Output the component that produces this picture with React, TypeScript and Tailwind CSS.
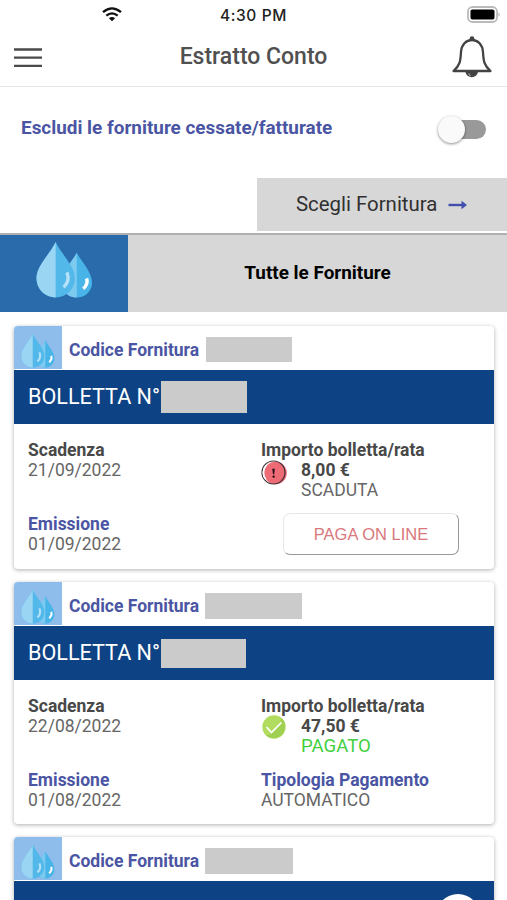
import type { ReactNode } from 'react';

interface BillDetails {
  numberClass: string;
  heightClass: string;
  dueDate: string;
  issueDate: string;
  amount: string;
  paid: boolean;
}

interface Bill {
  id: number;
  codeClass: string;
  details?: BillDetails;
}

const bills: Bill[] = [
  {
    id: 1,
    codeClass: 'ml-[7px] w-[86px] h-[25px]',
    details: {
      numberClass: 'w-[86px] h-[32px]',
      heightClass: 'h-[243px]',
      dueDate: '21/09/2022',
      issueDate: '01/09/2022',
      amount: '8,00 €',
      paid: false,
    },
  },
  {
    id: 2,
    codeClass: 'ml-[6px] w-[97px] h-[26px]',
    details: {
      numberClass: 'w-[85px] h-[29px]',
      heightClass: 'h-[242px]',
      dueDate: '22/08/2022',
      issueDate: '01/08/2022',
      amount: '47,50 €',
      paid: true,
    },
  },
  { id: 3, codeClass: 'ml-[6px] w-[88px] h-[26px]' },
];

function Drops({ className }: { className: string }) {
  return (
    <svg viewBox="0 0 58 58" className={className} preserveAspectRatio="none">
      <path d="M41.5 12C46 21 57 31 57 42.5A15.5 15 0 0 1 26 42.5C26 31 37 21 41.5 12Z" fill="#48b4e8" />
      <path d="M41.5 12C37 21 26 31 26 42.5A15.5 15 0 0 0 41.5 57.5Z" fill="#7dcaf1" />
      <path d="M20 1C26 14 39.5 25 39.5 38A19.5 19.5 0 0 1 .5 38C.5 25 14 14 20 1Z" fill="#52b8e9" />
      <path d="M20 1C14 14 .5 25 .5 38A19.5 19.5 0 0 0 20 57.5Z" fill="#9ad5f3" />
      <path d="M31.5 32Q35 41 28 47" fill="none" stroke="#b5e1f8" strokeWidth="3.5" />
      <path d="M51.5 38Q53.5 44 48 48.5" fill="none" stroke="#fff" strokeWidth="3.5" />
    </svg>
  );
}

function StatusBar() {
  return (
    <div className="grid h-[30px] shrink-0 grid-cols-3 items-center">
      <svg viewBox="0 0 20 15" className="ml-[102px] mt-[-2px] h-[15px] w-5">
        <path d="M1 5.2Q10-2.5 19 5.2M4.3 8.7Q10 4 15.7 8.7" fill="none" stroke="#111" strokeWidth="2.3" />
        <path d="M6.9 11.2Q10 8.7 13.1 11.2L10 14.3Z" fill="#111" />
      </svg>
      <span className="pt-px text-center font-['Inter'] text-[15.5px] font-medium tracking-[0.6px] text-[#222]">
        4:30 PM
      </span>
      <svg viewBox="0 0 34 18" className="mr-[6px] mt-[-1px] h-[18px] w-[34px] justify-self-end">
        <rect x="1" y="1" width="29" height="15" rx="4.5" fill="#fff" stroke="#bbb" strokeWidth="1.8" />
        <rect x="3.5" y="3.5" width="24" height="10" rx="1.8" fill="#000" />
        <path d="M31.5 6.5Q34 8.5 31.5 10.5Z" fill="#aaa" />
      </svg>
    </div>
  );
}

function Header() {
  return (
    <header className="flex h-[57px] shrink-0 items-center justify-between border-b border-[#e6e6e6] pl-[14px] pr-[14px]">
      <svg viewBox="0 0 42 22" className="h-[22px] w-[42px]">
        <path d="M0 2.5H28M0 10.7H28M0 18.9H28" stroke="#4a4a4a" strokeWidth="2.3" />
      </svg>
      <h1 className="pb-px text-[23px] font-medium text-[#505050]">Estratto Conto</h1>
      <svg viewBox="0 0 42 44" className="-mt-[2px] h-11 w-[42px]">
        <circle cx="21" cy="3.5" r="2.3" fill="#424242" />
        <path d="M14.5 37A6.3 6 0 0 0 27 37Z" fill="#424242" />
        <path d="M17.5 38.5L19.5 41" stroke="#aaa" strokeWidth="1.2" />
        <path
          d="M2.5 36C9.5 30 9.5 25 10 17C10.5 9.5 15 5 21 5S31.5 9.5 32 17C32.5 25 32.5 30 39.5 36Z"
          fill="#fff"
          stroke="#424242"
          strokeWidth="2.3"
          strokeLinejoin="round"
        />
      </svg>
    </header>
  );
}

function Field({ label, blue, children }: { label: string; blue?: boolean; children: ReactNode }) {
  return (
    <div>
      <p className={blue ? 'font-bold text-[#4a55a3]' : 'font-bold text-[#484848]'}>{label}</p>
      {children}
    </div>
  );
}

function AlertIcon() {
  return (
    <svg viewBox="0 0 26 26" className="h-[26px] w-[26px] shrink-0">
      <circle cx="14.5" cy="13" r="11.3" fill="#ee6b75" />
      <circle cx="12.5" cy="12.5" r="11.5" fill="none" stroke="#3c3035" strokeWidth="1.2" />
      <path d="M5 5.5A10.5 10.5 0 0 0 5 19.5" fill="none" stroke="#fff" strokeWidth="1.6" />
      <path d="M11.3 8.8H13.8L13.2 14.3H12Z" fill="#251014" />
      <circle cx="12.6" cy="16.6" r="1.2" fill="#251014" />
    </svg>
  );
}

function CheckIcon() {
  return (
    <svg viewBox="0 0 26 26" className="-mt-[2px] h-[26px] w-[26px] shrink-0">
      <circle cx="13" cy="13" r="11.7" fill="#b1dc5f" />
      <path d="M20.5 4A11.7 11.7 0 0 1 5 21.5Q17 19 20.5 4Z" fill="#9fd052" />
      <path d="M5.5 13L10.5 18.5L20.5 8.5" fill="none" stroke="#fff" strokeWidth="1.7" />
    </svg>
  );
}

function BillBody({ details }: { details: BillDetails }) {
  return (
    <div className="grid grid-cols-[233px_1fr] pl-[14px] pt-4 text-[17.5px] leading-5 text-[#666]">
      <div className="flex flex-col gap-[34px]">
        <Field label="Scadenza">
          <p>{details.dueDate}</p>
        </Field>
        <Field label="Emissione" blue>
          <p>{details.issueDate}</p>
        </Field>
      </div>
      <div>
        <Field label="Importo bolletta/rata">
          <div className="flex gap-[14px]">
            {details.paid ? <CheckIcon /> : <AlertIcon />}
            <div>
              <p className="font-bold text-[#484848]">{details.amount}</p>
              <p className={details.paid ? 'text-[18.6px] text-[#43cf40]' : ''}>
                {details.paid ? 'PAGATO' : 'SCADUTA'}
              </p>
            </div>
          </div>
        </Field>
        {details.paid ? (
          <div className="mt-[14px]">
            <Field label="Tipologia Pagamento" blue>
              <p>AUTOMATICO</p>
            </Field>
          </div>
        ) : (
          <button className="ml-[22px] mt-[13px] h-[42px] w-[176px] rounded-[7px] border border-b-[#999] border-l-[#e8e8e8] border-r-[#999] border-t-[#e8e8e8] font-['Liberation_Sans'] text-[16.5px] text-[#d9777c]">
            PAGA ON LINE
          </button>
        )}
      </div>
    </div>
  );
}

function BillCard({ bill }: { bill: Bill }) {
  const { details } = bill;

  return (
    <article
      className={`w-[480px] shrink-0 overflow-hidden rounded-[4px] bg-white shadow-[0_1px_4px_rgba(0,0,0,0.32)] ${details ? details.heightClass : 'h-[98px]'}`}
    >
      <div className="flex h-11 items-center">
        <div className="flex h-[43px] w-12 items-end self-start bg-[#8fbdeb] pb-px pl-[7px]">
          <Drops className="h-[35px] w-[34px]" />
        </div>
        <p className="ml-[7px] mt-[4px] w-[130px] whitespace-nowrap text-[17.5px] font-bold text-[#4a55a3]">
          Codice Fornitura
        </p>
        <span className={`mt-[3px] bg-[#cbcbcb] ${bill.codeClass}`} />
      </div>
      <div className="flex h-[54px] items-center bg-[#0d4284] pl-[14px]">
        {details && (
          <>
            <p className="w-[133px] whitespace-nowrap text-[21.6px] text-white">BOLLETTA N°</p>
            <span className={`bg-[#cbcbcb] ${details.numberClass}`} />
          </>
        )}
      </div>
      {details && <BillBody details={details} />}
    </article>
  );
}

export default function App() {
  return (
    <div className="relative flex h-[900px] w-[507px] flex-col overflow-hidden bg-white font-['Roboto',sans-serif]">
      <StatusBar />
      <Header />
      <div className="flex h-[91px] shrink-0 items-start justify-between pl-[21px] pr-[21px] pt-[27px]">
        <p className="text-[18.9px] font-bold leading-7 text-[#4a55a3]">Escludi le forniture cessate/fatturate</p>
        <div className="flex h-[30px] w-12 items-center">
          <span className="z-10 h-[27px] w-[27px] shrink-0 rounded-full bg-[#fafafa] shadow-[0_1px_3px_rgba(0,0,0,0.45)]" />
          <span className="-ml-[6px] h-[19px] w-[27px] rounded-r-full bg-[#999]" />
        </div>
      </div>
      <div className="ml-[257px] flex h-[53px] shrink-0 items-center bg-[#d7d7d7] pl-[39px]">
        <p className="w-[141px] whitespace-nowrap text-[20.4px] text-[#303030]">Scegli Fornitura</p>
        <svg viewBox="0 0 20 10" className="ml-[11px] h-[10px] w-5">
          <path d="M0.5 5H15" stroke="#404eae" strokeWidth="2.4" />
          <path d="M13.5 0.8L19 5L13.5 9.2Z" fill="#404eae" />
        </svg>
      </div>
      <div className="mt-[2px] flex h-[79px] shrink-0 border-t-2 border-[#b0b0b0]">
        <div className="w-[128px] bg-[#2a6cab] pl-[36px] pt-[6px]">
          <Drops className="h-[57px] w-[57px]" />
        </div>
        <div className="flex flex-1 items-center justify-center bg-[#d7d7d7] pb-px">
          <h2 className="text-[18.9px] font-bold text-black">Tutte le Forniture</h2>
        </div>
      </div>
      <main className="flex flex-col gap-[13px] pl-[14px] pt-[14px]">
        {bills.map((bill) => (
          <BillCard key={bill.id} bill={bill} />
        ))}
      </main>
      {/* floating action button peeking over the bottom edge */}
      <span className="absolute left-[436px] top-[894px] h-11 w-11 rounded-full bg-white" />
    </div>
  );
}
